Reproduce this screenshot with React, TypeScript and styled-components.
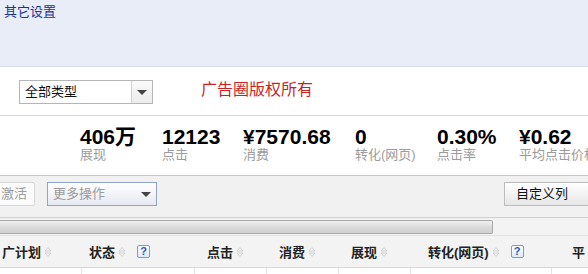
import React from "react";
import styled, { createGlobalStyle } from "styled-components";

const GlobalStyle = createGlobalStyle`
  html, body {
    margin: 0;
    padding: 0;
    background: #ffffff;
  }
  body {
    width: 588px;
    height: 274px;
    overflow: hidden;
    font-family: "Liberation Sans", "Noto Sans CJK SC", Arial, sans-serif;
  }
`;

const Page = styled.div`
  width: 588px;
  overflow: hidden;
`;

const TopPanel = styled.div`
  height: 67px;
  background: #e8edf8;
  border-bottom: 1px solid #d9dde9;
  box-sizing: border-box;
  padding: 2px 0 0 4px;
`;

const PanelTitle = styled.span`
  font-size: 13px;
  color: #1c3394;
  line-height: 16px;
`;

const FilterBar = styled.div`
  height: 49px;
  box-sizing: border-box;
  border-bottom: 1px solid #d4d4d4;
  display: flex;
  align-items: flex-start;
  padding: 13px 0 0 19px;
  gap: 48px;
`;

const SelectBox = styled.div<{ $w: number; $muted?: boolean }>`
  width: ${(p) => p.$w}px;
  height: 24px;
  box-sizing: border-box;
  display: flex;
  align-items: stretch;
  border: 1px solid ${(p) => (p.$muted ? "#8ea4c8" : "#b5b5b5")};
  background: ${(p) => (p.$muted ? "linear-gradient(#ffffff, #e6e9f2)" : "#ffffff")};
  font-size: 13px;
  color: ${(p) => (p.$muted ? "#9a9a9a" : "#111")};
`;

const SelectText = styled.span`
  flex: 1;
  padding-left: 5px;
  line-height: 22px;
`;

const SelectArrow = styled.span<{ $bordered?: boolean }>`
  width: 20px;
  display: flex;
  align-items: center;
  justify-content: center;
  border-left: ${(p) => (p.$bordered ? "1px solid #cfcfcf" : "none")};
  background: ${(p) => (p.$bordered ? "linear-gradient(#fafafa, #ececec)" : "transparent")};
  &::after {
    content: "";
    border-left: 5px solid transparent;
    border-right: 5px solid transparent;
    border-top: 5px solid #444;
  }
`;

const Copyright = styled.span`
  font-size: 16px;
  color: #cc1f1f;
  line-height: 22px;
  margin-top: -1px;
`;

const StatsBar = styled.div`
  height: 60px;
  box-sizing: border-box;
  border-bottom: 1px solid #c9c9c9;
  display: flex;
  padding: 11px 0 0 80px;
`;

const Stat = styled.div<{ $w: number }>`
  width: ${(p) => p.$w}px;
  flex-shrink: 0;
  display: flex;
  flex-direction: column;
  white-space: nowrap;
`;

const StatValue = styled.span`
  font-size: 21px;
  font-weight: bold;
  color: #000;
  line-height: 20px;
`;

const StatLabel = styled.span`
  font-size: 13px;
  color: #9b9b9b;
  line-height: 15px;
`;

const Toolbar = styled.div`
  height: 42px;
  box-sizing: border-box;
  background: #f1f1f1;
  border-bottom: 1px solid #cfcfcf;
  display: flex;
  align-items: flex-start;
  padding-top: 6px;
`;

const PlainButton = styled.div`
  height: 24px;
  box-sizing: border-box;
  margin-left: -12px;
  width: 47px;
  border: 1px solid #d6d6d6;
  border-radius: 2px;
  background: #fbfbfb;
  color: #9c9c9c;
  font-size: 13px;
  line-height: 22px;
  padding-left: 12px;
  margin-right: 12px;
`;

const CustomButton = styled.div`
  margin-left: auto;
  width: 84px;
  height: 24px;
  box-sizing: border-box;
  border: 1px solid #bcbcbc;
  border-right: none;
  background: linear-gradient(#ffffff, #e6e6e6);
  font-size: 13px;
  line-height: 22px;
  color: #111;
  padding-left: 11px;
`;

const ScrollRow = styled.div`
  height: 17px;
  background: #f3f3f3;
  padding-top: 2px;
  box-sizing: border-box;
`;

const ScrollThumb = styled.div`
  width: 493px;
  height: 14px;
  box-sizing: border-box;
  border: 1px solid #a9a9a9;
  border-left: none;
  border-radius: 0 2px 2px 0;
  background: linear-gradient(#f0f0f0, #dcdcdc 50%, #cfcfcf);
`;

const HeaderRow = styled.div`
  height: 33px;
  box-sizing: border-box;
  background: #f3f3f3;
  border-top: 1px solid #e2e2e2;
  border-bottom: 1px solid #d8d8d8;
  display: flex;
`;

const HeaderCell = styled.div<{ $w: number; $pad: number }>`
  width: ${(p) => p.$w}px;
  flex-shrink: 0;
  display: flex;
  align-items: center;
  padding-left: ${(p) => p.$pad}px;
  box-sizing: border-box;
  font-size: 13px;
  font-weight: bold;
  color: #222;
  white-space: nowrap;
  gap: 3px;
`;

const HelpIcon = styled.span`
  width: 13px;
  height: 13px;
  box-sizing: border-box;
  border: 1px solid #7b9ad6;
  border-radius: 2px;
  background: linear-gradient(#ffffff, #dfe8fa);
  color: #2b56b8;
  font-size: 11px;
  font-weight: bold;
  line-height: 11px;
  text-align: center;
  margin-left: 8px;
`;

const BodyRow = styled.div`
  height: 6px;
  display: flex;
`;

const BodyCell = styled.div<{ $w: number }>`
  width: ${(p) => p.$w}px;
  flex-shrink: 0;
  border-right: 1px solid #e4e4e4;
  box-sizing: border-box;
`;

const SortIcon = () => (
  <svg width="8" height="12" viewBox="0 0 8 12">
    <path d="M1 5 L4 1.5 L7 5 Z" fill="#f6f6f6" stroke="#c9c9c9" strokeWidth="0.8" />
    <path d="M1 7 L4 10.5 L7 7 Z" fill="#f6f6f6" stroke="#c9c9c9" strokeWidth="0.8" />
  </svg>
);

const stats = [
  { value: "406万", label: "展现", w: 82 },
  { value: "12123", label: "点击", w: 81 },
  { value: "¥7570.68", label: "消费", w: 112 },
  { value: "0", label: "转化(网页)", w: 82 },
  { value: "0.30%", label: "点击率", w: 82 },
  { value: "¥0.62", label: "平均点击价格", w: 90 },
];

const columns = [
  { title: "广计划", w: 82, pad: 2, help: false, sort: true },
  { title: "状态", w: 113, pad: 7, help: true, sort: true },
  { title: "点击", w: 72, pad: 12, help: false, sort: true },
  { title: "消费", w: 72, pad: 12, help: false, sort: true },
  { title: "展现", w: 72, pad: 12, help: false, sort: true },
  { title: "转化(网页)", w: 141, pad: 17, help: true, sort: true },
  { title: "平", w: 60, pad: 20, help: false, sort: false },
];

const bodyCols = [82, 113, 72, 72, 72, 141, 60];

export default function App() {
  return (
    <Page>
      <GlobalStyle />
      <TopPanel>
        <PanelTitle>其它设置</PanelTitle>
      </TopPanel>
      <FilterBar>
        <SelectBox $w={134}>
          <SelectText>全部类型</SelectText>
          <SelectArrow $bordered />
        </SelectBox>
        <Copyright>广告圈版权所有</Copyright>
      </FilterBar>
      <StatsBar>
        {stats.map((s) => (
          <Stat key={s.label} $w={s.w}>
            <StatValue>{s.value}</StatValue>
            <StatLabel>{s.label}</StatLabel>
          </Stat>
        ))}
      </StatsBar>
      <Toolbar>
        <PlainButton>激活</PlainButton>
        <SelectBox $w={110} $muted>
          <SelectText>更多操作</SelectText>
          <SelectArrow />
        </SelectBox>
        <CustomButton>自定义列</CustomButton>
      </Toolbar>
      <ScrollRow>
        <ScrollThumb />
      </ScrollRow>
      <HeaderRow>
        {columns.map((c) => (
          <HeaderCell key={c.title} $w={c.w} $pad={c.pad}>
            {c.title}
            {c.sort && <SortIcon />}
            {c.help && <HelpIcon>?</HelpIcon>}
          </HeaderCell>
        ))}
      </HeaderRow>
      <BodyRow>
        {bodyCols.map((w, i) => (
          <BodyCell key={i} $w={w} />
        ))}
      </BodyRow>
    </Page>
  );
}
